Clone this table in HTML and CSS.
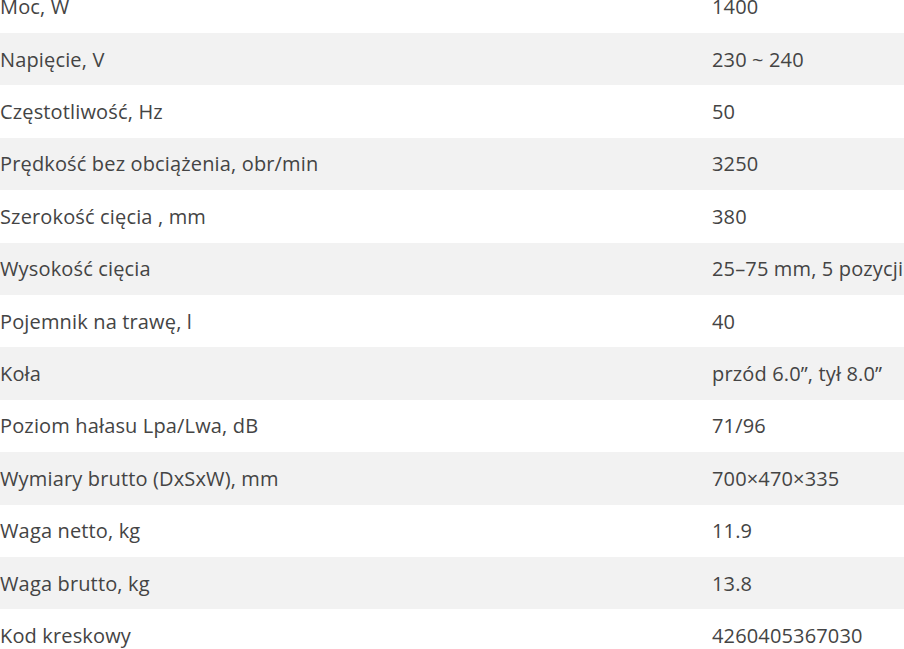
FILE: index.html
```html
<!DOCTYPE html>
<html lang="pl">
<head>
<meta charset="utf-8">
<link rel="stylesheet" href="styles.css">
</head>
<body>
<div class="specs">
  <div class="row"><div class="k">Moc, W</div><div class="v">1400</div></div>
  <div class="row alt"><div class="k">Napięcie, V</div><div class="v">230 ~ 240</div></div>
  <div class="row"><div class="k">Częstotliwość, Hz</div><div class="v">50</div></div>
  <div class="row alt"><div class="k">Prędkość bez obciążenia, obr/min</div><div class="v">3250</div></div>
  <div class="row"><div class="k">Szerokość cięcia , mm</div><div class="v">380</div></div>
  <div class="row alt"><div class="k">Wysokość cięcia</div><div class="v">25–75 mm, 5 pozycji</div></div>
  <div class="row"><div class="k">Pojemnik na trawę, l</div><div class="v">40</div></div>
  <div class="row alt"><div class="k">Koła</div><div class="v">przód 6.0”, tył 8.0”</div></div>
  <div class="row"><div class="k">Poziom hałasu Lpa/Lwa, dB</div><div class="v">71/96</div></div>
  <div class="row alt"><div class="k">Wymiary brutto (DxSxW), mm</div><div class="v">700×470×335</div></div>
  <div class="row"><div class="k">Waga netto, kg</div><div class="v">11.9</div></div>
  <div class="row alt"><div class="k">Waga brutto, kg</div><div class="v">13.8</div></div>
  <div class="row"><div class="k">Kod kreskowy</div><div class="v">4260405367030</div></div>
</div>
</body>
</html>
```
FILE: styles.css
```css
html, body {
  margin: 0;
  padding: 0;
  background: #ffffff;
  overflow: hidden;
}
.specs {
  margin-top: -19.4px;
  width: 1000px;
  font-family: "Open Sans", "Noto Sans", sans-serif;
  font-size: 20px;
  letter-spacing: 0.15px;
  color: #444444;
}
.row {
  display: grid;
  grid-template-columns: 712px 1fr;
  align-items: center;
  height: 52.4px;
  white-space: nowrap;
}
.row.alt {
  background: #f2f2f2;
}
```
